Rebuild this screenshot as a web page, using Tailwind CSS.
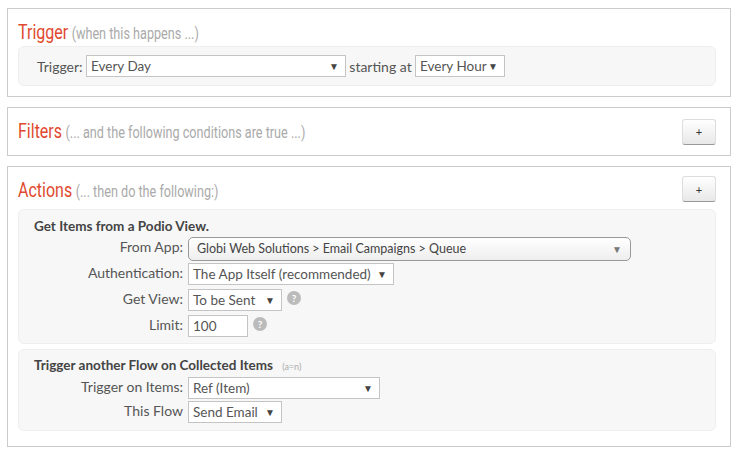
<!DOCTYPE html>
<html>
<head>
<meta charset="utf-8">
<script src="https://cdn.jsdelivr.net/npm/@tailwindcss/browser@4"></script>
</head>
<body class="bg-white font-['Lato',sans-serif] text-[13.5px] text-[#555] overflow-hidden">
<div class="w-[738px] h-[455px] pl-[7px] pr-[7px] pt-[8px]">

    <!-- Trigger -->
    <div class="border border-[#ccc] h-[89px] pl-[10px] pr-[14px] pt-[10px]">
        <div class="h-[27px] font-['Roboto',sans-serif] whitespace-nowrap origin-left scale-x-[.8] leading-[27px]">
            <span class="text-[20px] text-[#e0492e]">Trigger</span>
            <span class="text-[15.8px] text-[#aaa] ml-[1px]">(when this happens ...)</span>
        </div>
        <div class="h-[40px] bg-[#f7f7f7] border border-[#eee] rounded-[6px] flex items-center pl-[18px]">
            <span class="w-[45px] text-[14px]">Trigger:</span>
            <div class="ml-[4px] w-[260px] h-[22px] border border-[#c4c4c4] bg-white flex items-center justify-between pl-[4px] pr-[6px]">
                <span>Every Day</span>
                <span class="text-[10px] text-[#444]">▼</span>
            </div>
            <span class="w-[69px] text-center text-[14px]">starting at</span>
            <div class="w-[90px] h-[22px] border border-[#c4c4c4] bg-white flex items-center justify-between pl-[4px] pr-[6px]">
                <span>Every Hour</span>
                <span class="text-[10px] text-[#444]">▼</span>
            </div>
        </div>
    </div>

    <!-- Filters -->
    <div class="border border-[#ccc] h-[49px] mt-[10px] pl-[10px] pr-[14px] flex items-center justify-between">
        <div class="font-['Roboto',sans-serif] whitespace-nowrap origin-left scale-x-[.8] mb-[2px]">
            <span class="text-[20px] text-[#e0492e]">Filters</span>
            <span class="text-[15.8px] text-[#aaa] ml-[1px]">(... and the following conditions are true ...)</span>
        </div>
        <button class="w-[34px] h-[26px] border border-[#ddd] border-b-[#999] rounded-[3px] bg-gradient-to-b from-white to-[#e8e8e8] text-[11px] text-[#333] leading-none">+</button>
    </div>

    <!-- Actions -->
    <div class="border border-[#ccc] h-[281px] mt-[10px] pl-[10px] pr-[14px] pt-[9px]">
        <div class="flex items-center justify-between h-[26px] mb-[7px]">
            <div class="font-['Roboto',sans-serif] whitespace-nowrap origin-left scale-x-[.8] pt-[2px]">
                <span class="text-[20px] text-[#e0492e]">Actions</span>
                <span class="text-[15.8px] text-[#aaa] ml-[1px]">(... then do the following:)</span>
            </div>
            <button class="w-[34px] h-[26px] border border-[#ddd] border-b-[#999] rounded-[3px] bg-gradient-to-b from-white to-[#e8e8e8] text-[11px] text-[#333] leading-none">+</button>
        </div>

        <div class="h-[135px] bg-[#f7f7f7] border border-[#eee] rounded-[6px] pl-[15px] pt-[6px]">
            <div class="font-bold text-[#444] h-[20px] leading-[20px]">Get Items from a Podio View.</div>
            <div class="flex items-start mt-[1px]">
                <span class="w-[149px] text-right text-[14px] leading-[20px]">From App:</span>
                <div class="ml-[5px] w-[443px] h-[24px] border border-[#999] rounded-[5px] bg-gradient-to-b from-white to-[#eee] flex items-center justify-between pl-[8px] pr-[8px] text-[12.5px] text-[#444]">
                    <span>Globi Web Solutions &gt; Email Campaigns &gt; Queue</span>
                    <span class="text-[10px] text-[#777]">▼</span>
                </div>
            </div>
            <div class="flex items-center mt-[2px]">
                <span class="w-[149px] text-right text-[14px] leading-[20px] mb-[2px]">Authentication:</span>
                <div class="ml-[5px] w-[206px] h-[22px] border border-[#c4c4c4] bg-white flex items-center justify-between pl-[4px] pr-[6px]">
                    <span>The App Itself (recommended)</span>
                    <span class="text-[10px] text-[#444]">▼</span>
                </div>
            </div>
            <div class="flex items-center mt-[4px]">
                <span class="w-[149px] text-right text-[14px] leading-[20px] mb-[2px]">Get View:</span>
                <div class="ml-[5px] w-[94px] h-[22px] border border-[#c4c4c4] bg-white flex items-center justify-between pl-[4px] pr-[6px]">
                    <span>To be Sent</span>
                    <span class="text-[10px] text-[#444]">▼</span>
                </div>
                <span class="ml-[5px] mb-[4px] w-[14px] h-[14px] rounded-full bg-[#bbb] text-white text-[10px] font-bold flex items-center justify-center">?</span>
            </div>
            <div class="flex items-center mt-[4px]">
                <span class="w-[149px] text-right text-[14px] leading-[20px] mb-[2px]">Limit:</span>
                <div class="ml-[5px] w-[60px] h-[22px] border border-[#c4c4c4] bg-white flex items-center pl-[4px]">100</div>
                <span class="ml-[5px] mb-[4px] w-[14px] h-[14px] rounded-full bg-[#bbb] text-white text-[10px] font-bold flex items-center justify-center">?</span>
            </div>
        </div>

        <div class="h-[82px] mt-[5px] bg-[#f7f7f7] border border-[#eee] rounded-[6px] pl-[15px] pt-[5px]">
            <div class="font-bold text-[#444] h-[20px] leading-[20px]">Trigger another Flow on Collected Items <span class="font-normal text-[9px] text-[#aaa] ml-[6px]">(a=n)</span></div>
            <div class="flex items-center mt-[2px]">
                <span class="w-[149px] text-right text-[14px] leading-[20px] mb-[2px]">Trigger on Items:</span>
                <div class="ml-[5px] w-[192px] h-[22px] border border-[#c4c4c4] bg-white flex items-center justify-between pl-[4px] pr-[6px]">
                    <span>Ref (Item)</span>
                    <span class="text-[10px] text-[#444]">▼</span>
                </div>
            </div>
            <div class="flex items-center mt-[2px]">
                <span class="w-[149px] text-right text-[14px] leading-[20px] mb-[2px]">This Flow</span>
                <div class="ml-[5px] w-[94px] h-[22px] border border-[#c4c4c4] bg-white flex items-center justify-between pl-[4px] pr-[6px]">
                    <span>Send Email</span>
                    <span class="text-[10px] text-[#444]">▼</span>
                </div>
            </div>
        </div>
    </div>
</div>
</body>
</html>
